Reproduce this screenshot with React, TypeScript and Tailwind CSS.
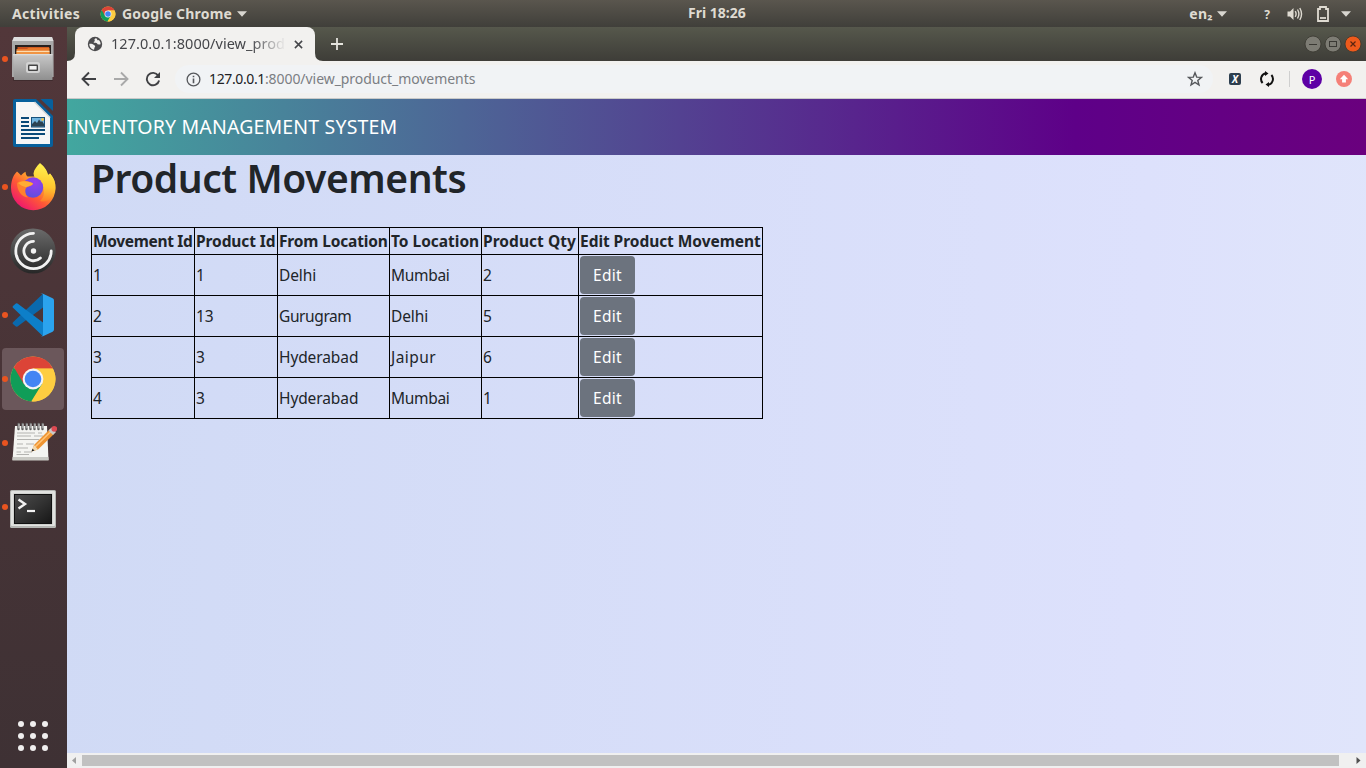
import type { ReactNode } from "react";

function ChromeLogo({ className }: { className: string }) {
  return (
    <svg viewBox="0 0 48 48" className={className}>
      <circle cx="24" cy="24" r="22.5" fill="#fdcd41" />
      <path d="M24 24 4.5 12.8A22.5 22.5 0 0 0 22.2 46.4L33 29Z" fill="#109d58" />
      <path d="M24 13.5H44A22.5 22.5 0 0 0 4.9 12.2L14.8 29Z" fill="#dc4437" />
      <path d="M33.4 29.2 23 46.5A22.5 22.5 0 0 0 44 13.8H24Z" fill="#fdcd41" />
      <circle cx="24" cy="24" r="10.4" fill="#f4f4f4" />
      <circle cx="24" cy="24" r="8.3" fill="#4285f4" />
    </svg>
  );
}

function FilesIcon() {
  return (
    <svg viewBox="0 0 48 48" className="size-12">
      <defs>
        <linearGradient id="cab" x1="0" y1="0" x2="0" y2="1">
          <stop offset="0" stopColor="#c9c9c9" />
          <stop offset="1" stopColor="#8f8f8f" />
        </linearGradient>
      </defs>
      <rect x="4" y="43" width="40" height="3" rx="1" fill="#2e2022" opacity=".5" />
      <path d="M5 2H43L44.6 6V42H3V6Z" fill="#a9a9a9" />
      <path d="M5 2H43L44.4 6H3.4Z" fill="#dedede" />
      <path d="M6 10H42V20H6Z" fill="#27201e" />
      <path d="M8.5 12H40V20H8.5Z" fill="#c8521f" />
      <path d="M7.5 14H18L19.5 12.8H40.5V20H7.5Z" fill="#e8792b" />
      <path d="M7.5 15.8H40.5V17H7.5Z" fill="#fbdcb0" />
      <path d="M7.5 17H40.5V20H7.5Z" fill="#f09443" />
      <path d="M4 19H43.5V45H5Z" fill="url(#cab)" />
      <path d="M4 19H43.5V20.2H4Z" fill="#dadada" />
      <rect x="17" y="27" width="14" height="11" rx="2.5" fill="#d2d2d2" />
      <rect x="19" y="29.5" width="10" height="6.4" rx="1" fill="#454545" />
      <rect x="20.4" y="31" width="7.2" height="3.6" fill="#f2f2f2" />
    </svg>
  );
}

function WriterIcon() {
  return (
    <svg viewBox="0 0 48 48" className="size-12">
      <path d="M6 0H27L44 17V46a2 2 0 0 1-2 2H6a2 2 0 0 1-2-2V2a2 2 0 0 1 2-2Z" fill="#07609c" />
      <path d="M31.5 0H42a2 2 0 0 1 2 2V12Z" fill="#07609c" />
      <path d="M7 3H25.5L41 18.5V45H7Z" fill="#f6f6f6" />
      <path d="M25.5 3 41 18.5" stroke="#d7d7d7" strokeWidth="1.5" />
      <path d="M12 19H20M12 23H20M12 27H20M12 31H36M12 35H36M12 39H30" stroke="#0b4a78" strokeWidth="2" />
      <rect x="22.5" y="18.5" width="13" height="9.5" fill="#72b5e0" stroke="#17517c" />
      <path d="M23 27.5V25L26 22 28 24 30 20.5 32 23 33 22 35 25V27.5Z" fill="#2c4353" />
      <circle cx="33.5" cy="20.5" r="1.4" fill="#f0c34a" />
    </svg>
  );
}

function FirefoxIcon() {
  return (
    <svg viewBox="0 0 48 48" className="size-12">
      <defs>
        <linearGradient id="ff" x1=".85" y1=".1" x2=".2" y2=".95">
          <stop offset="0" stopColor="#fff04a" />
          <stop offset=".35" stopColor="#ffa72c" />
          <stop offset=".62" stopColor="#ff5a35" />
          <stop offset="1" stopColor="#ee1470" />
        </linearGradient>
        <linearGradient id="ffy" x1=".5" y1="0" x2=".4" y2="1">
          <stop offset="0" stopColor="#fff44f" />
          <stop offset=".6" stopColor="#ffc72f" />
          <stop offset="1" stopColor="#ff7a28" />
        </linearGradient>
        <radialGradient id="ffp" cx=".6" cy=".25" r=".8">
          <stop offset="0" stopColor="#9a3df0" />
          <stop offset="1" stopColor="#5a50dc" />
        </radialGradient>
      </defs>
      <path d="M8 8.5C9.5 10 11 11 12 12.5 13 11 14.8 9.5 16.6 8.7 16.6 10.5 17 12 18.5 13.5H28L31 1C36 4 38 8 39 12L41 10.5C45 15 46.6 19.5 46.5 25A22.2 22.2 0 0 1 2 25C2 19.5 3.5 12.5 8 8.5Z" fill="url(#ff)" />
      <path d="M31 0C36 4 38 8 39 12 40 11.8 40.8 11 41 10.5 45.5 16 46.8 20 46.2 27 44 36 37 40 31 38 36 34 36 27 33 22 31 18 25 17 24.5 10.5 25 6.5 28 3 31 0Z" fill="url(#ffy)" />
      <circle cx="24" cy="24.5" r="10.2" fill="url(#ffp)" />
      <path d="M8 20C12 16 20 18 24 20.5 23.5 23 20 23 17.5 24.5 15.5 26.5 16 31 19 34.5 12 34 8 27 8 20Z" fill="#ff812d" />
      <path d="M9 20C14 17 20 18.5 24 20.5 23 22.8 19 23 17 24.3 14 23.2 11.5 22.5 9 20Z" fill="#ffad35" />
    </svg>
  );
}

function SpiralIcon() {
  return (
    <svg viewBox="0 0 48 48" className="size-12" fill="none" stroke="#f2f2f2" strokeWidth="2.8" strokeLinecap="round">
      <defs>
        <linearGradient id="sp" x1="0" y1="0" x2="0" y2="1">
          <stop offset="0" stopColor="#6b6b6b" />
          <stop offset="1" stopColor="#272727" />
        </linearGradient>
      </defs>
      <circle cx="24" cy="24" r="22.6" fill="url(#sp)" stroke="none" />
      <circle cx="24.5" cy="24" r="2.7" fill="#f2f2f2" stroke="none" />
      <path d="M24.5 6.3A17.7 17.7 0 1 0 42.2 24" />
      <path d="M24.5 14.3A9.7 9.7 0 1 0 31.4 30.9" />
    </svg>
  );
}

function CodeIcon() {
  return (
    <svg viewBox="0 0 48 48" className="size-12">
      <path d="M34 2.7 4 31.2a1.3 1.3 0 0 0 0 1.9L6.5 35.3a1.6 1.6 0 0 0 2 .1L34 16.5Z" fill="#0a69ad" />
      <path d="M34 45.2 4 16.8a1.3 1.3 0 0 1 0-1.9L6.5 12.7a1.6 1.6 0 0 1 2-.1L34 31.5Z" fill="#0d7fc9" />
      <path d="M34 2.7 43.6 7.2A2.4 2.4 0 0 1 45 9.4V38.6A2.4 2.4 0 0 1 43.6 40.8L34 45.2A2.7 2.7 0 0 1 31.3 44.6 1.5 1.5 0 0 0 34 43.5V4.5A1.5 1.5 0 0 0 31.3 3.3 2.7 2.7 0 0 1 34 2.7Z" fill="#2ba3ee" />
    </svg>
  );
}

function NotesIcon() {
  return (
    <svg viewBox="0 0 48 48" className="size-12">
      <path d="M6 7H38L39.5 41H3.5Z" fill="#f4f4f1" />
      <path d="M3.6 38H39.4L39.6 41.5H3.4Z" fill="#c9c9c4" />
      <path d="M8 14H26M29 14H33M8 17H22M25 17H34M8 20.5H30M8 25H14M17 25H25M7.5 29H19M7.5 33H12M15 33H23M7.5 35.5H20" stroke="#b3b3b0" strokeWidth="1" />
      <path d="M9.5 5V10M13.5 5V10M17.5 5V10M21.5 5V10M25.5 5V10M29.5 5V10M33.5 5V10" stroke="#5b5b5b" strokeWidth="2.4" strokeLinecap="round" />
      <path d="M10 5V9M14 5V9M18 5V9M22 5V9M26 5V9M30 5V9M34 5V9" stroke="#e6e6e6" strokeWidth="1" strokeLinecap="round" />
      <path d="M22.5 32.5 25 26 41 10 45.5 14.5 29 30.5Z" fill="#ef9431" />
      <path d="M26 28 43 11.5" stroke="#ffc377" strokeWidth="1.6" />
      <path d="M22.5 32.5 25 26 29 30.5Z" fill="#f0d8b0" />
      <path d="M22.5 32.5 23.5 29.8 25.5 31.5Z" fill="#222" />
      <path d="M39.5 11.5 42.5 8.5 47 13 44 16Z" fill="#c9c9c9" />
      <circle cx="45.3" cy="9.8" r="2.9" fill="#dd4a52" />
    </svg>
  );
}

function TerminalIcon() {
  return (
    <svg viewBox="0 0 48 48" className="mt-1 size-12">
      <defs>
        <linearGradient id="tm" x1="0" y1="0" x2="1" y2="1">
          <stop offset="0" stopColor="#4c4c4c" />
          <stop offset=".5" stopColor="#333333" />
          <stop offset="1" stopColor="#161616" />
        </linearGradient>
      </defs>
      <rect x="1" y="5" width="46" height="38" rx="1.5" fill="#b5b7b4" />
      <rect x="2" y="6" width="44" height="35" rx="1" fill="#e1e2e0" />
      <rect x="4.5" y="8.5" width="39" height="31" fill="#bfc1be" />
      <rect x="5.5" y="9.5" width="37" height="29" fill="url(#tm)" stroke="#111" />
      <path d="M9.5 14.5 16 19 9.5 23.5" fill="none" stroke="#f3f3f3" strokeWidth="2.4" />
      <path d="M18 26H26" stroke="#f3f3f3" strokeWidth="2.2" />
    </svg>
  );
}

function DockItem({ children, running = true, active = false }: { children: ReactNode; running?: boolean; active?: boolean }) {
  return (
    <div className="flex h-16 w-[67px] items-center">
      <div className={active ? "ml-0.5 flex h-[62px] w-[62px] items-center rounded bg-[#6b575b]" : "ml-0.5 flex h-[62px] w-[62px] items-center rounded"}>
        <div className={running ? "size-[5.5px] shrink-0 rounded-full bg-[#e95420]" : "size-[5.5px] shrink-0"} />
        <div className="ml-[1.5px] shrink-0">{children}</div>
      </div>
    </div>
  );
}

function Caret({ className }: { className: string }) {
  return (
    <svg viewBox="0 0 10 6" className={className}>
      <path d="M0 .3H10L5 5.8Z" fill="#d8d6d0" />
    </svg>
  );
}

function TopBar() {
  return (
    <header className="flex h-[27px] shrink-0 items-center bg-linear-to-b from-[#5a564e] to-[#403f3a] text-[14px] font-bold text-[#dfdbd2]">
      <div className="flex w-[688px] items-center">
        <span className="ml-3 w-[88px] tracking-[0.3px]">Activities</span>
        <ChromeLogo className="size-4" />
        <span className="ml-1.5 tracking-[0.2px]">Google Chrome</span>
        <Caret className="ml-[5px] h-1.5 w-2.5" />
      </div>
      <span className="-translate-y-px whitespace-nowrap">Fri 18:26</span>
      <div className="flex flex-1 items-center justify-end pr-[15px]">
        <span className="tracking-[0.3px]">en₂</span>
        <Caret className="ml-[4px] mr-[35px] h-1.5 w-2.5" />
        <span className="mr-[15px] w-[10px] pt-[2px] text-center text-[12px]">?</span>
        <svg viewBox="0 0 16 16" className="mr-[14px] size-4" fill="none" stroke="#dfdbd2" strokeWidth="1.4">
          <path d="M.5 5.5H3L6.5 2V14L3 10.5H.5Z" fill="#dfdbd2" stroke="none" />
          <path d="M8.2 5.2Q10 8 8.2 10.8M10.5 3.5Q13.3 8 10.5 12.5M12.8 2Q16.3 8 12.8 14" />
        </svg>
        <svg viewBox="0 0 12 16" className="mr-[12px] h-4 w-3" fill="none" stroke="#dfdbd2" strokeWidth="1.8">
          <path d="M1 3H3V1H9V3H11V15H1Z" />
          <path d="M3 12H9" />
        </svg>
        <Caret className="h-1.5 w-2.5" />
      </div>
    </header>
  );
}

function TabStrip() {
  return (
    <div className="flex h-[34px] shrink-0 bg-linear-to-b from-[#56584c] to-[#3e3d38]">
      <svg viewBox="0 0 8 8" className="mt-[26px] size-2">
        <path d="M8 0V8H0Q8 8 8 0Z" fill="#f2f1ef" />
      </svg>
      <div className="flex w-60 items-center rounded-t-lg bg-[#f2f1ef] pl-3">
        <svg viewBox="0 0 16 16" className="size-4">
          <circle cx="8" cy="8" r="7.2" fill="#4c4c4e" />
          <path d="M8.8 2.2C7.4 3 7 3.8 7.8 4.5 8.2 5.4 6.8 5.3 6.6 6.5 7.6 7.2 9.4 6.6 10.2 7.6 10.4 8.7 11.6 8.6 13.6 8.3 13.7 6 12.4 4.6 11.6 4 10.8 4.6 10 4.2 10.2 3.2 9.8 2.5 9.3 2.2 8.8 2.2ZM2.3 7.8C4 7.6 6 8 7 9 8 9.6 8.6 10.4 7.8 11.2 7 11.8 7.6 12.6 7 13.7 4.4 13.3 2.2 11 2.3 7.8Z" fill="#f2f1ef" />
        </svg>
        <span className="ml-2 w-[175px] overflow-hidden whitespace-nowrap mask-r-from-80% text-[14.5px] tracking-[0.04px] text-[#45464a]">127.0.0.1:8000/view_prod</span>
        <svg viewBox="0 0 10 10" className="ml-[8px] size-[9px]" stroke="#45464a" strokeWidth="1.7">
          <path d="M1 1 9 9M9 1 1 9" />
        </svg>
      </div>
      <svg viewBox="0 0 8 8" className="mt-[26px] size-2">
        <path d="M0 0V8H8Q0 8 0 0Z" fill="#f2f1ef" />
      </svg>
      <svg viewBox="0 0 12 12" className="ml-2 mt-[11px] size-3" stroke="#e5e4de" strokeWidth="1.8">
        <path d="M6 0V12M0 6H12" />
      </svg>
      <div className="ml-auto mr-[5px] flex items-center gap-1">
        <svg viewBox="0 0 16 16" className="size-4 overflow-visible">
          <circle cx="8" cy="8" r="8" fill="#7d7c74" stroke="#37362f" strokeWidth=".8" />
          <path d="M4 8.5H12" stroke="#3a3934" />
        </svg>
        <svg viewBox="0 0 16 16" className="size-4 overflow-visible">
          <circle cx="8" cy="8" r="8" fill="#7d7c74" stroke="#37362f" strokeWidth=".8" />
          <rect x="4.5" y="5.5" width="7" height="5" fill="none" stroke="#3a3934" />
        </svg>
        <svg viewBox="0 0 16 16" className="size-4 overflow-visible">
          <circle cx="8" cy="8" r="8" fill="#ee5a1c" stroke="#37362f" strokeWidth=".8" />
          <path d="M5.5 5.5 10.5 10.5M10.5 5.5 5.5 10.5" stroke="#5a2410" strokeWidth="1.2" />
        </svg>
      </div>
    </div>
  );
}

function AddressBar() {
  return (
    <div className="flex h-[38px] shrink-0 items-center border-b border-[#c9cac9] bg-[#f2f1ef] pb-px">
      <svg viewBox="0 0 16 16" className="ml-[14px] size-4" fill="none" stroke="#404144" strokeWidth="1.9">
        <path d="M15 8H2M8 1.5 1.5 8 8 14.5" />
      </svg>
      <svg viewBox="0 0 16 16" className="ml-4 size-4" fill="none" stroke="#a9a9a9" strokeWidth="1.9">
        <path d="M1 8H14M8 1.5 14.5 8 8 14.5" />
      </svg>
      <svg viewBox="0 0 16 16" className="ml-4 size-4" fill="none" stroke="#404144" strokeWidth="1.9">
        <path d="M13.2 4.6A6.2 6.2 0 1 0 14.1 9.5" />
        <path d="M15 1V7H9Z" fill="#404144" stroke="none" />
      </svg>
      <div className="ml-[14px] flex h-7 w-[1038px] items-center rounded-full bg-[#f1f3f5] pl-[11px] pr-[10px] text-[14px]">
        <svg viewBox="0 0 16 16" className="size-[15px]" fill="none" stroke="#56585c" strokeWidth="1.4">
          <circle cx="8" cy="8" r="6.8" />
          <path d="M8 7V12M8 4V5.7" strokeWidth="1.7" />
        </svg>
        <span className="ml-2 -translate-y-px tracking-[-0.38px] text-[#202124]">127.0.0.1</span>
        <span className="-translate-y-px tracking-[-0.06px] text-[#7b7e83]">:8000/view_product_movements</span>
        <svg viewBox="0 0 16 16" className="ml-auto size-4" fill="none" stroke="#56585c" strokeWidth="1.4">
          <path d="M8 1.8 9.7 6.1 14.4 6.4 10.8 9.4 12 14 8 11.4 4 14 5.2 9.4 1.6 6.4 6.3 6.1Z" />
        </svg>
      </div>
      <div className="ml-4 flex h-3 w-3 items-center justify-center rounded-[2px] bg-[#2e3f4f] text-[10px] font-bold italic leading-none text-white">X</div>
      <svg viewBox="0 0 16 16" className="ml-[18px] size-4" fill="none" stroke="#111" strokeWidth="2">
        <path d="M3.6 12A6 6 0 0 1 6.5 2.2M12.4 4A6 6 0 0 1 9.5 13.8" />
        <path d="M6 0 9.5 2.5 6 5ZM10 11 6.5 13.5 10 16Z" fill="#111" stroke="none" />
      </svg>
      <div className="ml-[14px] h-4 w-px bg-[#cfcfcf]" />
      <div className="ml-[12px] flex size-5 items-center justify-center rounded-full bg-[#5e00a5] text-[11px] leading-none text-white">P</div>
      <svg viewBox="0 0 16 16" className="ml-[14px] size-4">
        <circle cx="8" cy="8" r="8" fill="#f58078" />
        <path d="M8 3.8 12.2 8.2H9.9V11.6H6.1V8.2H3.8Z" fill="#fff" />
      </svg>
    </div>
  );
}

const headings = [
  { label: "Movement Id", className: "w-[103px] tracking-[-0.33px]" },
  { label: "Product Id", className: "w-[83px] tracking-[-0.1px]" },
  { label: "From Location", className: "w-[112px] tracking-[-0.16px]" },
  { label: "To Location", className: "w-[92px] tracking-[-0.02px]" },
  { label: "Product Qty", className: "w-[97px] tracking-[0.05px]" },
  { label: "Edit Product Movement", className: "w-[184px] tracking-[-0.05px]" },
];

const movements = [
  ["1", "1", "Delhi", "Mumbai", "2"],
  ["2", "13", "Gurugram", "Delhi", "5"],
  ["3", "3", "Hyderabad", "Jaipur", "6"],
  ["4", "3", "Hyderabad", "Mumbai", "1"],
];

const tracking: Record<string, string> = {
  Delhi: "tracking-[-0.1px]",
  Mumbai: "tracking-[-0.3px]",
  Gurugram: "tracking-[-0.4px]",
  Hyderabad: "tracking-[-0.1px]",
  Jaipur: "tracking-[0.45px]",
};

function Page() {
  return (
    <main className="flex min-h-0 flex-1 flex-col bg-linear-[92deg,#d0daf5_0%,#dde1fc_82%,#e0e5fb_100%] text-[#212529]">
      <div className="flex h-14 shrink-0 items-center bg-linear-[90deg,#42a79f_0%,#5e0088_77.6%,#6a007e_100%] text-[19.5px] tracking-[0.17px] text-white">
        INVENTORY MANAGEMENT SYSTEM
      </div>
      <div className="pl-6">
        <h1 className="h-[46px] text-[39px] font-[560] leading-[46px] tracking-[-0.45px]">Product Movements</h1>
        <table className="mt-[26px] w-[672px] table-fixed border-collapse text-[15.5px]">
          <thead>
            <tr className="h-[27px]">
              {headings.map((h) => (
                <th key={h.label} className={"whitespace-nowrap border border-black p-px text-left font-bold leading-6 " + h.className}>
                  {h.label}
                </th>
              ))}
            </tr>
          </thead>
          <tbody>
            {movements.map((row) => (
              <tr key={row[0]} className="h-[41px]">
                {row.map((cell, i) => (
                  <td key={i} className={"border border-black p-px leading-6 " + (tracking[cell] ?? "")}>
                    {cell}
                  </td>
                ))}
                <td className="border border-black p-px">
                  <button className="block h-[38px] w-[55px] rounded bg-[#6c737e] text-center leading-6 tracking-[0.3px] text-white">Edit</button>
                </td>
              </tr>
            ))}
          </tbody>
        </table>
      </div>
    </main>
  );
}

export default function App() {
  return (
    <div className="flex h-screen w-screen flex-col overflow-hidden font-['Noto_Sans',sans-serif]">
      <TopBar />
      <div className="flex min-h-0 flex-1">
        <nav className="flex w-[67px] shrink-0 flex-col bg-linear-to-b from-[#52373a] to-[#3e3134]">
          <DockItem><FilesIcon /></DockItem>
          <DockItem running={false}><WriterIcon /></DockItem>
          <DockItem><FirefoxIcon /></DockItem>
          <DockItem running={false}><SpiralIcon /></DockItem>
          <DockItem><CodeIcon /></DockItem>
          <DockItem active><ChromeLogo className="size-12" /></DockItem>
          <DockItem><NotesIcon /></DockItem>
          <DockItem><TerminalIcon /></DockItem>
          <div className="mb-[17px] ml-[18px] mt-auto grid w-[30px] grid-cols-3 gap-1.5">
            {Array.from({ length: 9 }, (_, i) => (
              <div key={i} className="size-1.5 rounded-full bg-[#f0eeee]" />
            ))}
          </div>
        </nav>
        <div className="flex min-w-0 flex-1 flex-col">
          <TabStrip />
          <AddressBar />
          <Page />
          <div className="flex h-[15px] shrink-0 items-center bg-[#f0f0f0]">
            <svg viewBox="0 0 15 15" className="w-[15px]"><path d="M9 4V11L5 7.5Z" fill="#a0a0a0" /></svg>
            <div className="h-[11px] w-[1257px] bg-[#c1c1c1]" />
            <svg viewBox="0 0 15 15" className="ml-auto w-[15px]"><path d="M5.5 4V11L9.5 7.5Z" fill="#505050" /></svg>
          </div>
        </div>
      </div>
    </div>
  );
}
